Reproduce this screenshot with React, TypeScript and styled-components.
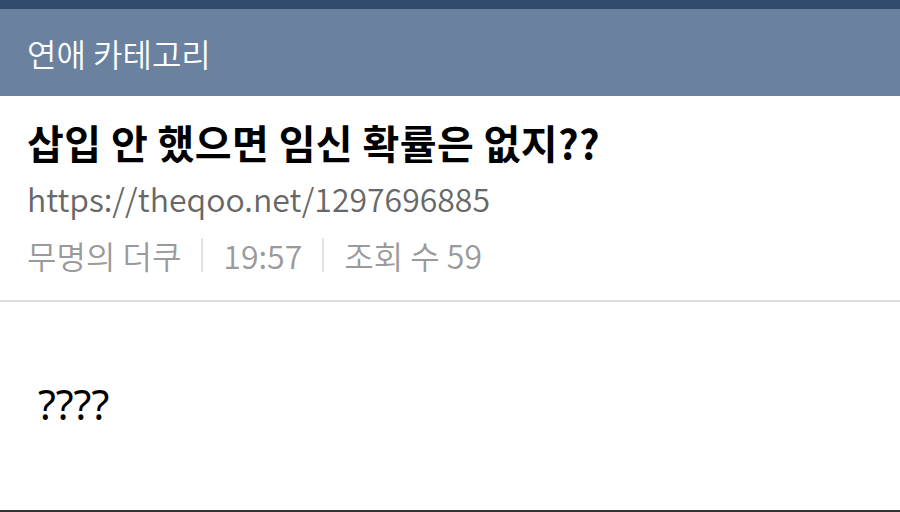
import React from "react";
import styled, { createGlobalStyle } from "styled-components";

const Global = createGlobalStyle`
  html, body { margin: 0; padding: 0; background: #fff; }
  body { font-family: "Noto Sans CJK KR", "Noto Sans", sans-serif; }
  * { box-sizing: border-box; }
`;

const Page = styled.div`
  width: 900px;
  height: 512px;
  display: flex;
  flex-direction: column;
  background: #fff;
  overflow: hidden;
`;

const TopStrip = styled.div`
  height: 9px;
  background: #2e4a6c;
  flex-shrink: 0;
`;

const CategoryBar = styled.div`
  height: 87px;
  background: #6a82a0;
  display: flex;
  align-items: center;
  padding: 0 27px 0;
  color: #fff;
  font-size: 32px;
  font-weight: 350;
  flex-shrink: 0;
`;

const Head = styled.div`
  padding: 15px 27px 0;
  height: 206px;
  border-bottom: 2px solid #dedede;
  flex-shrink: 0;
`;

const Title = styled.h1`
  margin: 0;
  font-size: 40px;
  font-weight: 700;
  letter-spacing: 0.4px;
  color: #000;
  line-height: 62px;
`;

const Url = styled.div`
  font-size: 32px;
  font-weight: 350;
  color: #676767;
  line-height: 50px;
`;

const Meta = styled.div`
  display: flex;
  align-items: center;
  font-size: 32px;
  font-weight: 350;
  color: #9a9a9a;
  line-height: 64px;
`;

const Sep = styled.span`
  width: 2px;
  height: 34px;
  background: #e2e2e2;
  margin: 0 20px;
`;

const Body = styled.div`
  flex: 1;
  padding: 74px 38px 0;
  font-family: "Noto Sans", "Open Sans", sans-serif;
  font-size: 41px;
  color: #000;
  border-bottom: 2px solid #333;
`;

export default function App() {
  return (
    <>
      <Global />
      <Page>
        <TopStrip />
        <CategoryBar>연애 카테고리</CategoryBar>
        <Head>
          <Title>삽입 안 했으면 임신 확률은 없지??</Title>
          <Url>https://theqoo.net/1297696885</Url>
          <Meta>
            <span>무명의 더쿠</span>
            <Sep />
            <span>19:57</span>
            <Sep />
            <span>조회 수 59</span>
          </Meta>
        </Head>
        <Body>????</Body>
      </Page>
    </>
  );
}
